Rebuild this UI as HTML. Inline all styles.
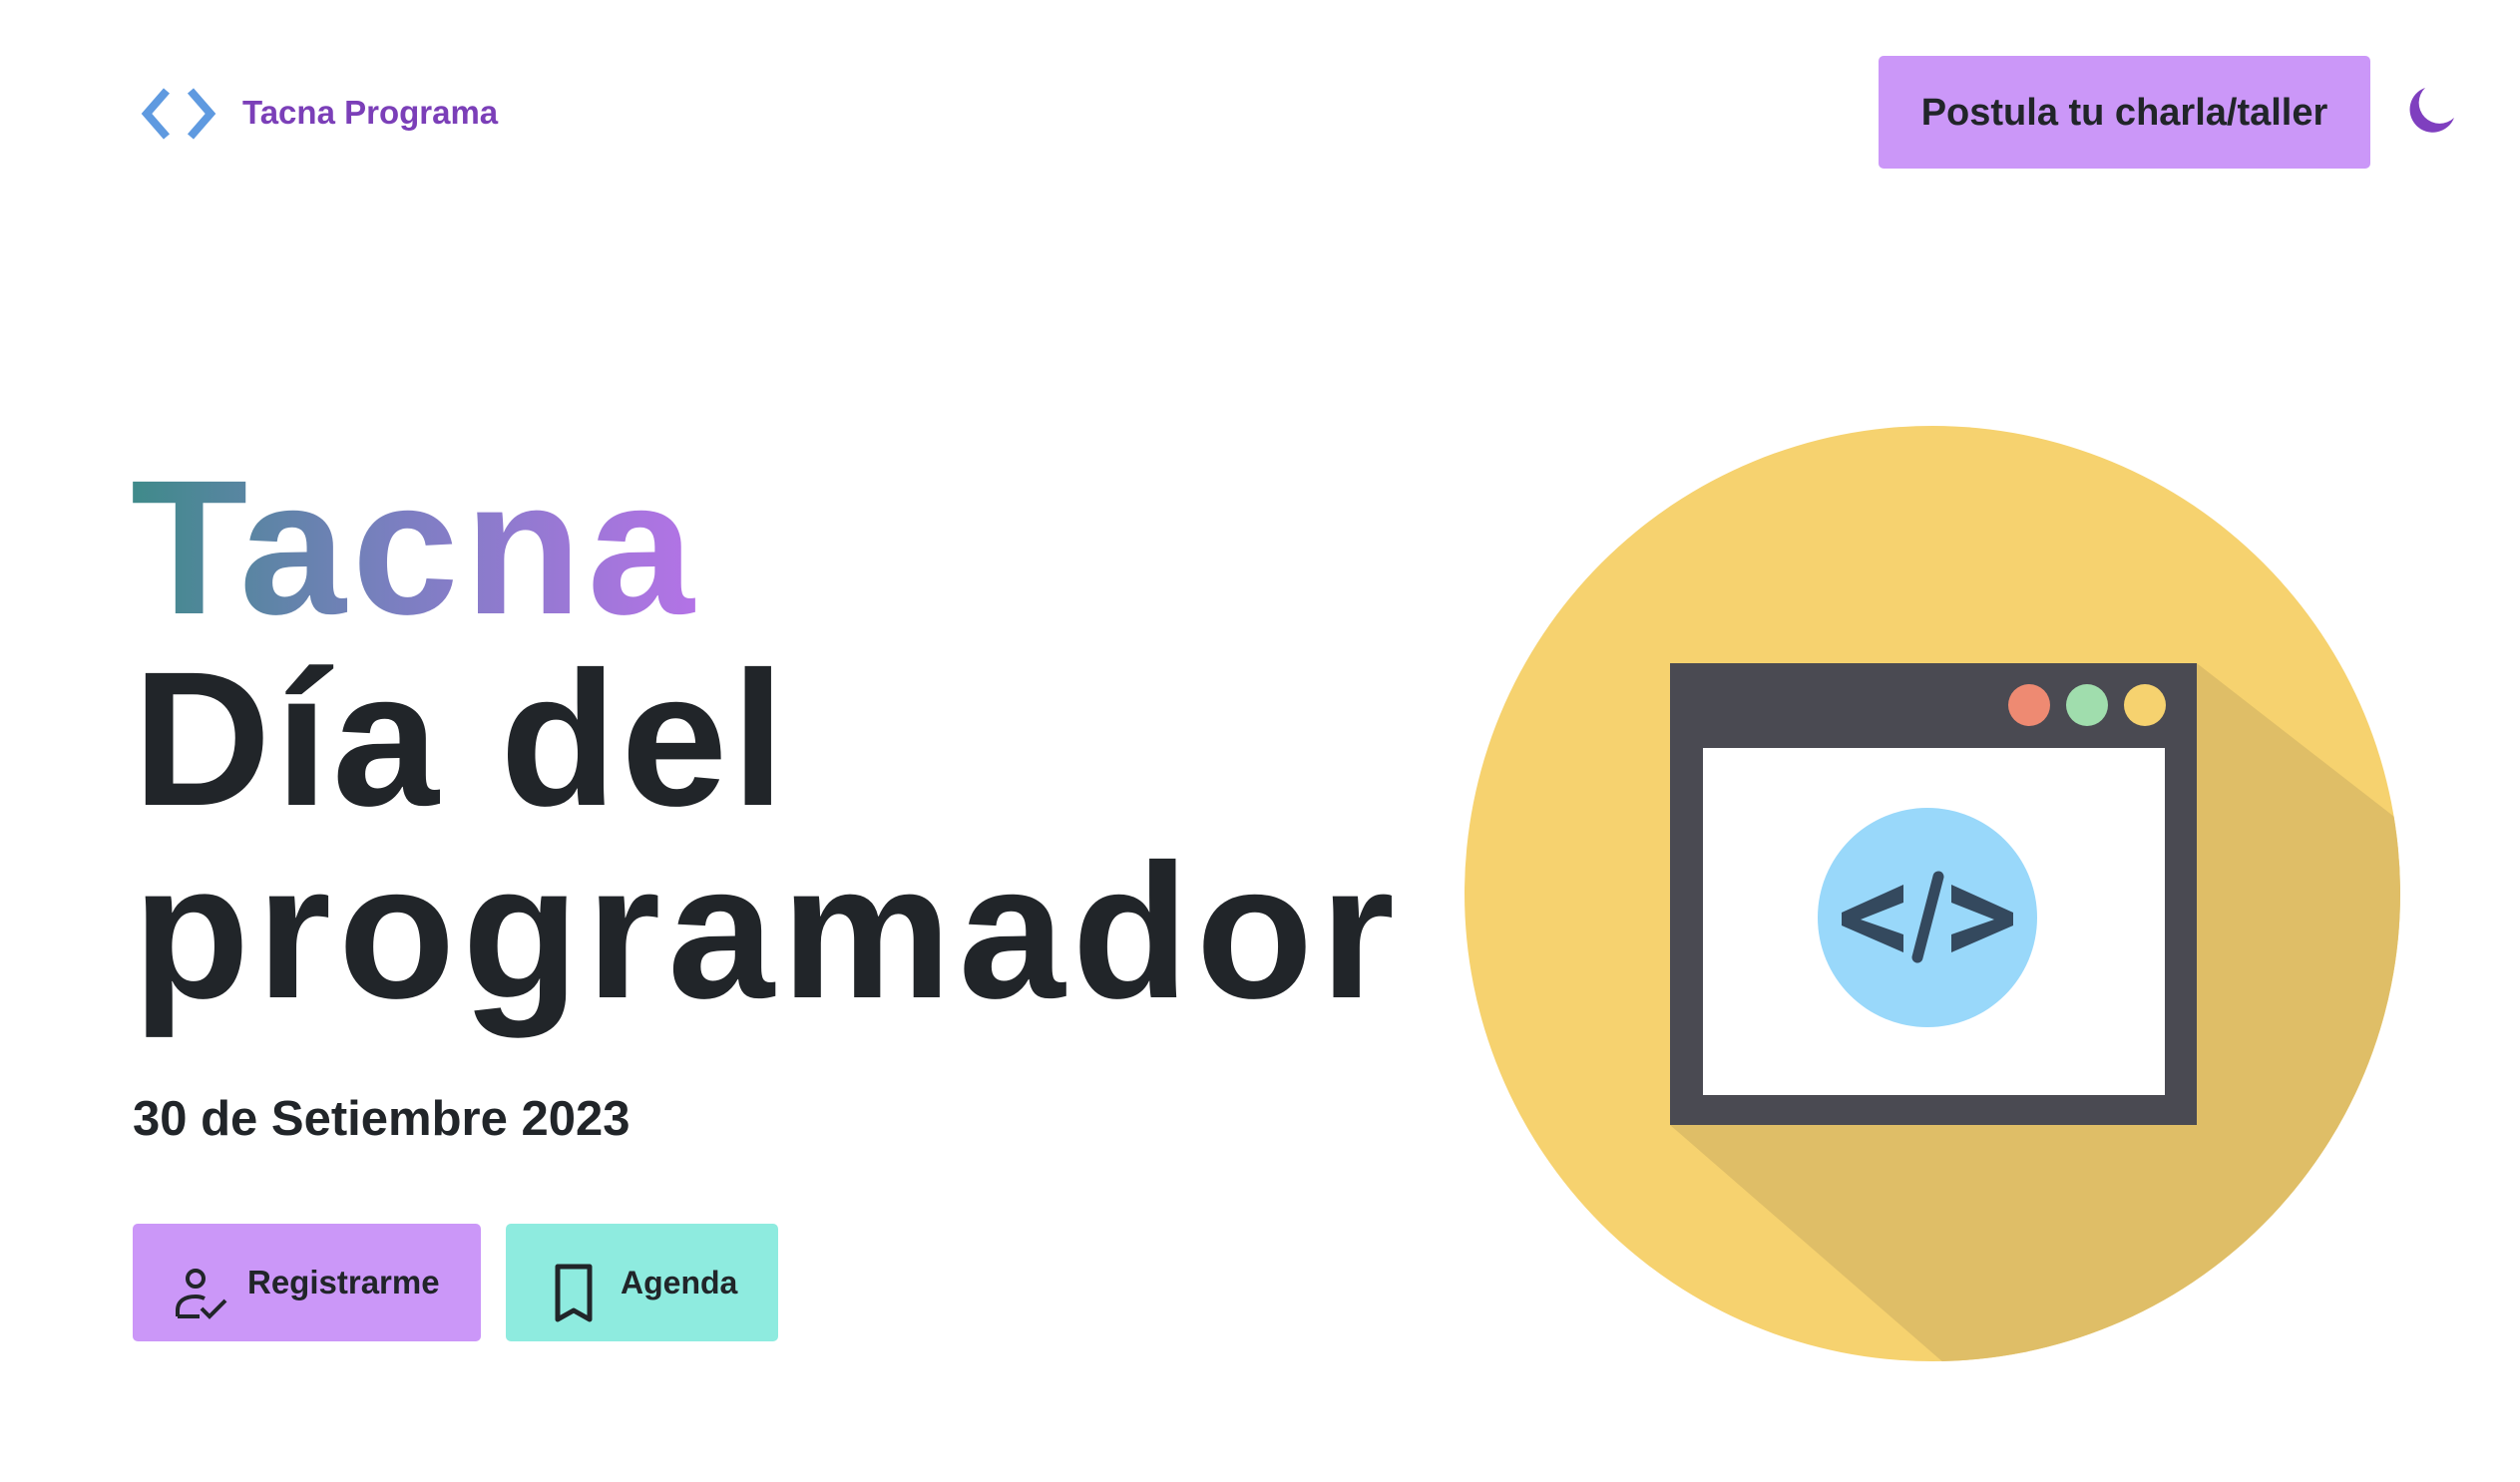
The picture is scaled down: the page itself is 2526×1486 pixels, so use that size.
<!DOCTYPE html>
<html><head><meta charset="utf-8"><style>
html,body{margin:0;padding:0;background:#fff;}
body{width:2526px;height:1486px;position:relative;overflow:hidden;font-family:"Liberation Sans",sans-serif;font-weight:bold;color:#212529;}
.abs{position:absolute;white-space:nowrap;}
.big{font-size:192px;line-height:192px;}
.grad{background:linear-gradient(90deg,#3f8a8a 0%,#7a7fc0 45%,#b672e8 100%);-webkit-background-clip:text;background-clip:text;color:transparent;}
.btn{position:absolute;border-radius:5px;}
</style></head><body>
<svg class="abs" style="left:139px;top:86px" width="82" height="56" viewBox="0 0 82 56">
<path d="M28 5 L8 28 L28 51" fill="none" stroke="#5f9ae0" stroke-width="8"/>
<path d="M52 5 L72 28 L52 51" fill="none" stroke="#5f9ae0" stroke-width="8"/>
</svg>
<div class="abs" style="left:243px;top:93px;font-size:33px;line-height:40px;color:#7b3fb8">Tacna Programa</div>

<div class="btn" style="left:1883px;top:56px;width:493px;height:113px;background:#cb97f8"></div>
<div class="abs" style="left:1883px;top:91px;width:493px;text-align:center;font-size:38px;line-height:44px">Postula tu charla/taller</div>

<svg class="abs" style="left:2412px;top:86px" width="50" height="50" viewBox="0 0 50 50">
<path d="M19 2 A23 23 0 1 0 48 32 A20 20 0 0 1 19 2 Z" fill="#7f3fbf"/>
</svg>

<div class="abs big grad" style="left:131px;top:453px;letter-spacing:6px;padding-right:10px">Tacna</div>
<div class="abs big" style="left:133px;top:645px;letter-spacing:4px">Día del</div>
<div class="abs big" style="left:133px;top:838px;letter-spacing:7px">programador</div>

<div class="abs" style="left:133px;top:1094px;font-size:49px;line-height:56px">30 de Setiembre 2023</div>

<div class="btn" style="left:133px;top:1227px;width:349px;height:118px;background:#cb97f8"></div>
<svg class="abs" style="left:176px;top:1270px" width="54" height="56" viewBox="0 0 54 56">
<circle cx="20" cy="12" r="8" fill="none" stroke="#212529" stroke-width="4"/>
<path d="M2 50 V44 C2 34 10 30 20 30 C24 30 27 31 29 32" fill="none" stroke="#212529" stroke-width="4"/>
<path d="M2 50 H24" stroke="#212529" stroke-width="4"/>
<path d="M26 42 L34 50 L50 34" fill="none" stroke="#212529" stroke-width="4"/>
</svg>
<div class="abs" style="left:248px;top:1266px;font-size:33px;line-height:40px">Registrarme</div>

<div class="btn" style="left:507px;top:1227px;width:273px;height:118px;background:#8eebdf"></div>
<svg class="abs" style="left:555px;top:1266px" width="40" height="62" viewBox="0 0 40 62">
<path d="M4 4 H36 V57 L20 48 L4 57 Z" fill="none" stroke="#212529" stroke-width="5" stroke-linejoin="round"/>
</svg>
<div class="abs" style="left:622px;top:1266px;font-size:32px;line-height:40px">Agenda</div>

<svg class="abs" style="left:0;top:0" width="2526" height="1486" viewBox="0 0 2526 1486">
<defs><clipPath id="c"><circle cx="1937" cy="896" r="469"/></clipPath></defs>
<circle cx="1937" cy="896" r="469" fill="#f6d26f"/>
<polygon clip-path="url(#c)" points="2202,665 2427,840 2427,1400 1987,1400 1674,1128" fill="#dfbe67"/>
<rect x="1674" y="665" width="528" height="463" fill="#4a4a52"/>
<rect x="1707" y="750" width="463" height="348" fill="#fff"/>
<circle cx="2034" cy="707" r="21" fill="#ee8a72"/>
<circle cx="2092" cy="707" r="21" fill="#a0ddad"/>
<circle cx="2150" cy="707" r="21" fill="#f6d26f"/>
<circle cx="1932" cy="920" r="110" fill="#99d8fa"/>
<polygon points="1846,915 1908,887 1908,905 1865,922 1908,937 1908,955 1846,928" fill="#34495e"/>
<polygon points="2018,915 1956,887 1956,905 1999,922 1956,937 1956,955 2018,928" fill="#34495e"/>
<line x1="1943" y1="879" x2="1922" y2="960" stroke="#34495e" stroke-width="11" stroke-linecap="round"/>
</svg>
</body></html>
